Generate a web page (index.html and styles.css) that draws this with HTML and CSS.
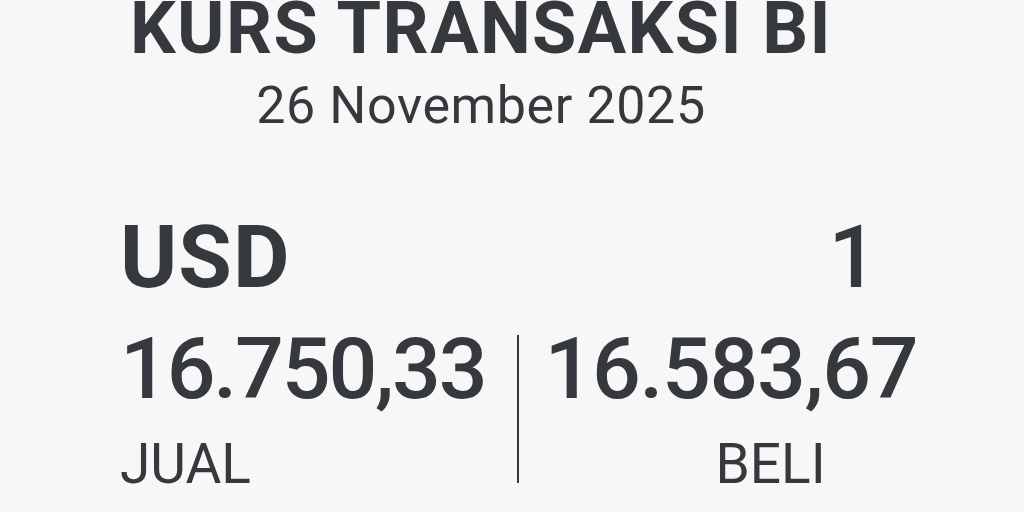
FILE: index.html
```html
<!DOCTYPE html>
<html>
<head>
<meta charset="utf-8">
<link rel="stylesheet" href="styles.css">
</head>
<body>
<div class="page">
  <header class="head">
    <h1 class="title">KURS TRANSAKSI BI</h1>
    <div class="date">26 November 2025</div>
  </header>
  <section class="card">
    <div class="currency-row">
      <span class="code">USD</span>
      <span class="unit">1</span>
    </div>
    <div class="rates">
      <div class="rate sell">
        <div class="value">16.750,33</div>
        <div class="label">JUAL</div>
      </div>
      <div class="divider"></div>
      <div class="rate buy">
        <div class="value">16.583,67</div>
        <div class="label">BELI</div>
      </div>
    </div>
  </section>
</div>
</body>
</html>
```
FILE: styles.css
```css
html, body {
  margin: 0;
  padding: 0;
  background: #f7f7f7;
}
body {
  font-family: Roboto, "Noto Sans", sans-serif;
  color: #35383d;
  width: 1024px;
  height: 512px;
  overflow: hidden;
}
.page {
  display: flex;
  flex-direction: column;
}
.head {
  display: flex;
  flex-direction: column;
  align-items: center;
  width: 962px;
}
.title {
  margin: 0;
  font-size: 72px;
  font-weight: 700;
  line-height: 58px;
  letter-spacing: 1.4px;
  white-space: nowrap;
}
.date {
  font-size: 52px;
  font-weight: 400;
  line-height: 60px;
  margin-top: 18px;
  letter-spacing: 0.6px;
  white-space: nowrap;
}
.card {
  margin-left: 120px;
  width: 800px;
  margin-top: 76px;
}
.currency-row {
  display: flex;
  justify-content: space-between;
  align-items: baseline;
  padding-right: 42px;
}
.code {
  font-size: 87px;
  font-weight: 700;
  line-height: 90px;
  letter-spacing: 1px;
}
.unit {
  font-size: 87px;
  font-weight: 500;
  line-height: 90px;
}
.rates {
  display: flex;
  margin-top: 22px;
}
.rate {
  display: flex;
  flex-direction: column;
}
.sell {
  width: 397px;
  flex-shrink: 0;
}
.buy {
  padding-left: 26px;
}
.value {
  font-size: 86px;
  font-weight: 500;
  line-height: 90px;
  letter-spacing: -2.2px;
  white-space: nowrap;
}
.buy .value {
  letter-spacing: -1.4px;
}
.label {
  font-size: 55px;
  font-weight: 400;
  line-height: 60px;
  margin-top: 20px;
}
.buy .label {
  padding-left: 171px;
}
.divider {
  flex-shrink: 0;
  width: 1.5px;
  background: #35383d;
  margin: 11px 0 11px;
}
```
